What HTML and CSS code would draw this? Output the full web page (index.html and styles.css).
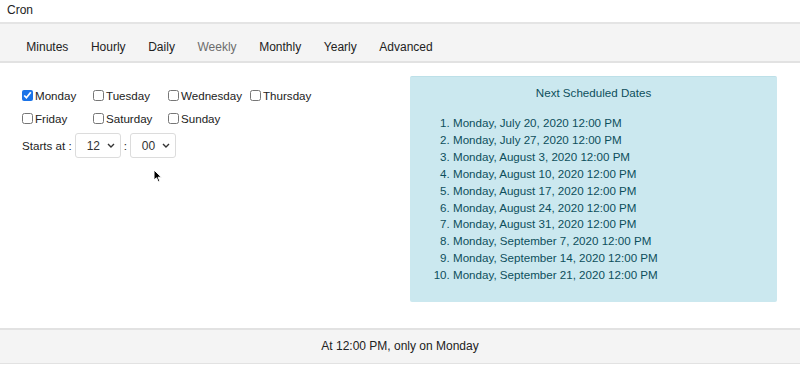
FILE: index.html
```html
<!DOCTYPE html>
<html lang="en">
<head>
  <meta charset="UTF-8">
  <title>Cron</title>
  <link rel="stylesheet" href="styles.css">
</head>
<body>
  <div class="title">Cron</div>

  <ul class="tabs">
    <li>Minutes</li>
    <li>Hourly</li>
    <li>Daily</li>
    <li class="active">Weekly</li>
    <li>Monthly</li>
    <li>Yearly</li>
    <li>Advanced</li>
  </ul>

  <div class="content">
    <div class="weekly">
      <div class="days">
        <label><input type="checkbox" checked>Monday</label>
        <label><input type="checkbox">Tuesday</label>
        <label><input type="checkbox">Wednesday</label>
        <label><input type="checkbox">Thursday</label>
        <label><input type="checkbox">Friday</label>
        <label><input type="checkbox">Saturday</label>
        <label><input type="checkbox">Sunday</label>
      </div>
      <div class="starts">
        <span>Starts at :</span>
        <div class="time">
          <span>12</span>
          <svg width="8" height="5" viewBox="0 0 8 5"><path d="M1 1 L4 4 L7 1" fill="none" stroke="#333" stroke-width="1.4"/></svg>
        </div>
        <span>:</span>
        <div class="time">
          <span>00</span>
          <svg width="8" height="5" viewBox="0 0 8 5"><path d="M1 1 L4 4 L7 1" fill="none" stroke="#333" stroke-width="1.4"/></svg>
        </div>
      </div>
    </div>

    <div class="alert">
      <div class="alert-title">Next Scheduled Dates</div>
      <ol class="dates">
        <li>Monday, July 20, 2020 12:00 PM</li>
        <li>Monday, July 27, 2020 12:00 PM</li>
        <li>Monday, August 3, 2020 12:00 PM</li>
        <li>Monday, August 10, 2020 12:00 PM</li>
        <li>Monday, August 17, 2020 12:00 PM</li>
        <li>Monday, August 24, 2020 12:00 PM</li>
        <li>Monday, August 31, 2020 12:00 PM</li>
        <li>Monday, September 7, 2020 12:00 PM</li>
        <li>Monday, September 14, 2020 12:00 PM</li>
        <li>Monday, September 21, 2020 12:00 PM</li>
      </ol>
    </div>
  </div>

  <div class="summary">At 12:00 PM, only on Monday</div>

  <!-- mouse pointer -->
  <svg class="cursor" width="10" height="14" viewBox="0 0 10 14">
    <path d="M1 1 L1 11 L3.5 8.8 L5.3 12.8 L6.9 12.1 L5.1 8.2 L8.4 8.2 Z" fill="#000" stroke="#fff" stroke-width="1"/>
  </svg>
</body>
</html>
```

FILE: styles.css
```css
body {
  margin: 0;
  font-family: "Liberation Sans", Arial, sans-serif;
  font-size: 12px;
  color: #222;
  background: #fff;
  position: relative;
  height: 373px;
  overflow: hidden;
}
.title {
  height: 22px;
  line-height: 20px;
  padding-left: 7px;
}

/* tabs */
.tabs {
  list-style: none;
  margin: 0;
  padding: 0 0 0 15px;
  display: flex;
  height: 37px;
  align-items: flex-end;
  background: #f4f4f4;
  border-top: 2px solid #e4e4e4;
  border-bottom: 2px solid #e2e2e2;
}
.tabs li {
  padding: 0 11.3px 6px;
  line-height: 16px;
  color: #222;
}
.tabs li.active {
  color: #6c6c6c;
}

/* body */
.content {
  display: flex;
  justify-content: space-between;
  padding: 13px 23px 0 22px;
  height: 252px;
  font-size: 11.6px;
}
.weekly {
  padding-top: 12px;
}
.days {
  display: grid;
  grid-template-columns: 71px 75px 82px auto;
  row-gap: 9px;
}
.days label {
  display: flex;
  align-items: center;
  height: 14px;
}
.days input {
  width: 11px;
  height: 11px;
  margin: 0 2px 0 0;
  accent-color: #1a73e8;
}
.starts {
  display: flex;
  align-items: center;
  gap: 3px;
  margin-top: 8px;
}
.time {
  display: flex;
  align-items: center;
  justify-content: space-between;
  width: 46px;
  height: 25px;
  box-sizing: border-box;
  padding: 0 5px 0 11px;
  border: 1px solid #dcdcdc;
  border-radius: 3px;
  background: #fff;
  color: #333;
  font-size: 12px;
}

.alert {
  width: 367px;
  height: 226px;
  box-sizing: border-box;
  background: #cbe8ef;
  border-top: 1px solid #bde0e8;
  border-radius: 2px;
  color: #0d4f5c;
  padding-top: 8px;
}
.alert-title {
  text-align: center;
  line-height: 16px;
}
.dates {
  margin: 14px 0 0;
  padding-left: 43px;
}
.dates li {
  line-height: 16.9px;
}

.summary {
  height: 33px;
  line-height: 33px;
  text-align: center;
  background: #f4f4f4;
  border-top: 2px solid #e2e2e2;
  border-bottom: 1px solid #e2e2e2;
}

.cursor {
  position: absolute;
  left: 153px;
  top: 169px;
}
```
